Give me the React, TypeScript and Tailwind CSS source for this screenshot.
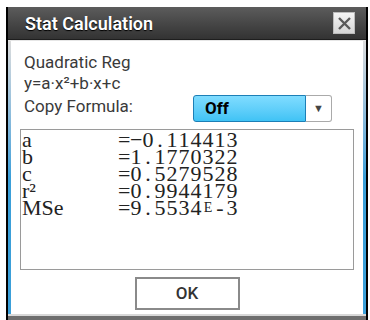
import React from "react";

const rows: { label: string; value: string }[] = [
  { label: "a", value: "=−0.114413" },
  { label: "b", value: "=1.1770322" },
  { label: "c", value: "=0.5279528" },
  { label: "r²", value: "=0.9944179" },
  { label: "MSe", value: "=9.5534E-3" },
];

const MonoValue = ({ text }: { text: string }) => (
  <span className="flex">
    {text.split("").map((ch, i) =>
      ch === "E" ? (
        <span key={i} className="w-[12px] text-center text-[14px]">
          E
        </span>
      ) : (
        <span key={i} className="w-[12px] text-center">
          {ch}
        </span>
      )
    )}
  </span>
);

const App = (): React.JSX.Element => {
  return (
    <div className="w-[370px] h-[320px] bg-white pt-[7px] pl-[6px] overflow-hidden">
      <div className="w-[362px] h-[313px] border-x-2 border-black flex flex-col">
        {/* title bar */}
        <div className="h-[33px] shrink-0 flex items-center justify-between pl-[17px] pr-[11px] bg-gradient-to-b from-[#5c5c5c] to-[#333] border-b border-[#1e1e1e]">
          <span className="font-['Roboto',sans-serif] font-semibold text-[18px] text-white [text-shadow:0_1px_1px_#000]">
            Stat Calculation
          </span>
          <div className="w-[22px] h-[22px] bg-gradient-to-b from-[#f4f4f4] to-[#d6d6d6] border border-[#bbb] flex items-center justify-center">
            <svg width="15" height="15" viewBox="0 0 15 15">
              <path d="M2 2L13 13M13 2L2 13" stroke="#5a5a5a" strokeWidth="2.4" />
            </svg>
          </div>
        </div>

        {/* body */}
        <div className="flex-1 flex border-t border-[#e6e6e6]">
          <div className="w-[3px] bg-gradient-to-b from-[#dcdcdc] via-[#3a9fd9] to-[#3a9fd9]" />
          <div className="flex-1 flex flex-col px-[9px] pt-[11px] bg-white text-[#3a3a3a]">
            <div className="pl-[4px] font-['Roboto',sans-serif] text-[17px] leading-[21px]">
              <div>Quadratic Reg</div>
              <div>y=a·x²+b·x+c</div>
              <div className="flex items-start mt-[1px]">
                <span className="w-[169px] leading-[22px]">Copy Formula:</span>
                <div className="flex h-[27px]">
                  <div className="w-[113px] border border-[#1c7fb6] rounded-l-[3px] bg-gradient-to-b from-[#7fdcff] to-[#3fc3f5] flex items-center pl-[11px] font-bold text-black">
                    Off
                  </div>
                  <div className="w-[26px] border border-l-0 border-[#aaa] rounded-r-[3px] bg-white flex items-center justify-center text-[#444] text-[11px]">
                    ▼
                  </div>
                </div>
              </div>
            </div>

            {/* results */}
            <div className="mt-[7px] h-[141px] border border-[#9a9a9a] pt-[1px] font-['Liberation_Serif',serif] text-[22px] leading-[17px] text-[#222]">
              {rows.map((r, i) => (
                <div key={i} className="flex">
                  <span className="w-[97px] pl-[1px]">{r.label}</span>
                  <MonoValue text={r.value} />
                </div>
              ))}
            </div>

            <div className="flex justify-center mt-[7px]">
              <button className="w-[105px] h-[33px] border-2 border-[#8a8a8a] bg-white font-['Roboto',sans-serif] font-medium text-[17px] text-[#333]">
                OK
              </button>
            </div>
          </div>
          <div className="w-[3px] bg-gradient-to-b from-[#dcdcdc] via-[#3a9fd9] to-[#3a9fd9]" />
        </div>

        {/* bottom edge */}
        <div className="h-[6px] shrink-0 border-t-2 border-[#d8d8d8] bg-[#6e6e6e]" />
      </div>
    </div>
  );
};

export default App;
